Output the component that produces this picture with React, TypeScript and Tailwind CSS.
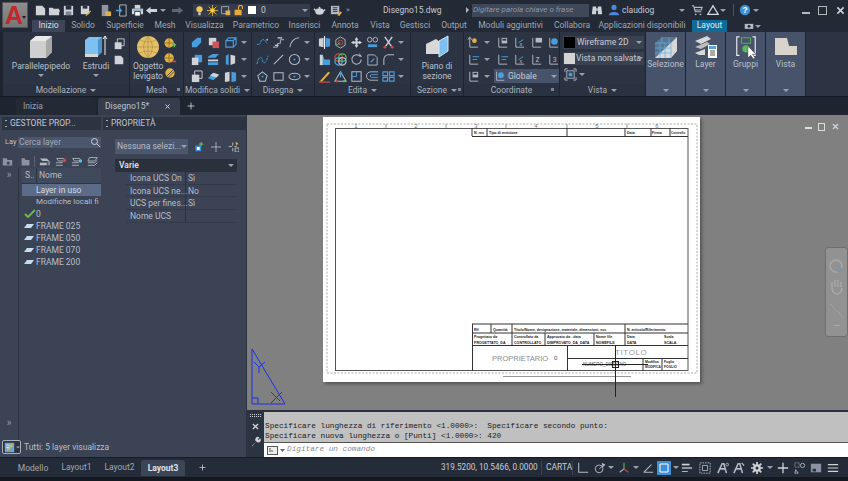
import React from "react";

const L = "#b4bac4", B = "#4a9ddd", W = "#cfd2d6", Y = "#e0b248", R = "#d0483e", G = "#5cb85c";
const line = { fill: "none", stroke: L, strokeWidth: 1 } as const;

const I: Record<string, React.ReactNode> = {
  doc: <path d="M2 2h7l3 3v7H2z" fill={W} />,
  open: <path d="M1 4h4l1 1h6v7H1zM3 7h10l-2 5H1z" fill={W} />,
  save: <g><path d="M2 2h10v10H2z" fill={W} /><path d="M4 2h6v4H4z" fill="#2a3040" /><path d="M4 8h6v4H4z" fill="#7b8494" /></g>,
  saveas: <g><path d="M2 2h9v9H2z" fill={W} /><path d="M4 2h5v3H4z" fill="#2a3040" /><path d="M7 12l5-5 1 1-5 5z" fill={Y} /></g>,
  phone: <g><path d="M3 1h7v12H3z" fill="#8f959e" /><path d="M7 8h6v5H7z" fill={Y} /></g>,
  phone2: <g><path d="M5 1h7v12H5z" fill="none" stroke={L} /><path d="M1 7h6M5 5l2 2-2 2" stroke={B} fill="none" strokeWidth="1.400" /></g>,
  print: <g><path d="M1 5h12v6H1z" fill={W} /><path d="M4 1h6v4H4z" fill={W} /><path d="M4 8h6v5H4z" fill="#fff" stroke="#2a3040" /><path d="M2 6h10v1H2z" fill={B} /></g>,
  undo: <path d="M1 7l5-4v2.500h7v3H6V11z" fill={W} />,
  redo: <path d="M13 7L8 3v2.500H1v3h7V11z" fill="#5f6674" />,
  bulb: <g><circle cx="7" cy="5.500" r="4" fill="#f4c84a" /><path d="M5.500 9.500h3V13h-3z" fill="#c9cdd3" /></g>,
  sun: <g><circle cx="7" cy="7" r="3" fill="#f4c84a" /><path d="M7 0v14M0 7h14M2 2l10 10M12 2L2 12" stroke="#f4c84a" /></g>,
  freeze: <g><path d="M2 2h9v9H2z" {...line} /><path d="M7 7h6v6H7z" fill={Y} /></g>,
  lock: <g><path d="M2 6h9v7H2z" fill="#e8a93c" /><path d="M7 6V3a2.500 2.500 0 0 1 5 0v2" fill="none" stroke="#e8a93c" strokeWidth="1.500" /></g>,
  teapot: <g><ellipse cx="7" cy="8" rx="4.500" ry="3.500" fill={W} /><path d="M1 5l3 3M13 6l-3 3" stroke={W} strokeWidth="1.500" /><circle cx="7" cy="4" r="1" fill={W} /></g>,
  qlist: <g><path d="M1 2h9v9H1z" fill={L} /><path d="M3 4h5M3 6h5M3 8h5" stroke="#2a3040" /><path d="M8 12l3-4 2 1-3 4z" fill={Y} /></g>,
  binoc: <g><path d="M2 3h4v9H1zM8 3h4l1 9H8z" fill={W} /><path d="M6 5h2v3H6z" fill={W} /></g>,
  user: <g><circle cx="7" cy="4" r="3" fill="#4b86dc" /><path d="M1 13c0-5 12-5 12 0z" fill="#4b86dc" /></g>,
  cart: <g><path d="M1 2h2l2 7h7M4 4h9l-1 3H5" {...line} strokeWidth="1.300" /><circle cx="5.500" cy="12" r="1" fill={L} /><circle cx="11" cy="12" r="1" fill={L} /></g>,
  tri: <g><path d="M7 2l6 10H1z" fill="none" stroke="#d9dfe8" strokeWidth="1.500" /></g>,
  help: <g><circle cx="7" cy="7" r="6" fill="#3f8fd6" /><text x="7" y="10.500" textAnchor="middle" fontSize="10" fontWeight="700" fill="#fff" fontFamily="Liberation Sans">?</text></g>,
  unite: <g><path d="M3 6l5-4h4v5l-5 5H2V7z" fill={B} /></g>,
  subtract: <g><path d="M2 2h8v8H2z" fill={W} /><path d="M6 6h7v7H6z" fill="#d0545a" /></g>,
  wire: <g><path d="M2 5l3-3h8v7l-3 3H2zM2 5h8v7M10 5l3-3" fill="none" stroke={B} strokeWidth="1.200" /></g>,
  overlap: <g><path d="M5 2h8v8H5z" fill={B} /><path d="M2 5h7v8H2z" fill={W} /></g>,
  layers: <g><path d="M1 4l5-3h7l-4 4H1z" fill={B} /><path d="M1 7h11v2H1z" fill={W} /><path d="M1 10h11v3H1z" fill={B} /></g>,
  split: <g><path d="M2 3l3-2v12l-3-1z" fill={B} /><path d="M7 2l5 1v8l-5 2z" fill={W} /></g>,
  stack: <g><path d="M5 1h8v8H5z" fill="none" stroke={W} /><path d="M2 5h8v8H2z" fill={W} /></g>,
  eraser: <g><path d="M1 9l6-6 6 2-6 6z" fill={B} /><path d="M3 6l4-3 6 2-3 3z" fill={W} /></g>,
  slab: <g><path d="M1 3l5-1v10l-5 1z" fill={W} /><path d="M8 2l5 1v9l-5 1z" fill={B} /></g>,
  poly: <g><path d="M1 9h3l2-5h3l3 4" fill="none" stroke={B} strokeDasharray="2 1" /><circle cx="12" cy="4" r="1" fill={L} /></g>,
  stair: <g><path d="M1 12h5V8h3V4h4" {...line} /><path d="M6 2h5M3 10h4" stroke={W} strokeWidth="1.400" /></g>,
  arc: <path d="M2 12C3 6 7 2 12 2" {...line} strokeWidth="1.100" />,
  spline: <path d="M1 12C3 3 6 3 7 8s4 3 6-5" fill="none" stroke={B} strokeDasharray="3 1" />,
  lineI: <path d="M2 12L12 2" {...line} strokeWidth="1.100" />,
  circle: <g><circle cx="7" cy="7" r="5.500" {...line} strokeWidth="1.100" /><circle cx="7" cy="7" r="1" fill={B} /></g>,
  polygon: <g><path d="M7 2l5 4-2 6H4L2 6z" {...line} strokeWidth="1.100" /><circle cx="7" cy="7" r="1" fill={B} /></g>,
  rect: <path d="M2 3h10v8H2z" {...line} strokeWidth="1.100" />,
  ell: <g><ellipse cx="7" cy="7" rx="6" ry="3.500" {...line} strokeWidth="1.100" /><circle cx="7" cy="7" r="1" fill={B} /></g>,
  mirror: <g><path d="M1 3l5-1v10l-5-1z" fill={W} /><path d="M8 2l5 1v8l-5 1z" fill={B} /><path d="M7 0v14" stroke="#fff" /></g>,
  rot3d: <g><path d="M7 1l5 3v6l-5 3-5-3V4z" {...line} /><circle cx="7" cy="7" r="2.500" fill="none" stroke={R} /><path d="M2 10l5-3" stroke={G} /></g>,
  move: <path d="M7 1l2 3H8v2h2V5l3 2-3 2V8H8v2h1l-2 3-2-3h1V8H4v1L1 7l3-2v1h2V4H5z" fill={W} />,
  link: <g><circle cx="4" cy="4" r="2.500" {...line} /><circle cx="10" cy="4" r="2.500" {...line} /><path d="M2 9h10v3H2z" fill={B} /></g>,
  scissor: <g><path d="M3 1l7 10M11 1L4 11" stroke={W} strokeWidth="1.500" /><circle cx="3" cy="12" r="1.500" fill={R} /><circle cx="11" cy="12" r="1.500" fill={R} /></g>,
  face: <g><path d="M2 2h3l2 5h6v6H2z" fill={B} /><path d="M2 2h3v11H2z" fill={W} /></g>,
  fourc: <g><circle cx="5" cy="5" r="4" fill="none" stroke={R} strokeWidth="1.400" /><circle cx="9" cy="5" r="4" fill="none" stroke={G} strokeWidth="1.400" /><circle cx="5" cy="9" r="4" fill="none" stroke={B} strokeWidth="1.400" /><circle cx="9" cy="9" r="4" fill="none" stroke={L} strokeWidth="1.400" /></g>,
  rotate: <g><path d="M12 7a5 5 0 1 1-2-4" {...line} strokeWidth="1.100" /><path d="M10 0v4h3z" fill={L} /></g>,
  scale: <g><path d="M2 2h7l3 3v8H2z" {...line} /><path d="M5 10l4-4" stroke={B} strokeWidth="1.300" /></g>,
  fillet: <path d="M2 13V7a5 5 0 0 1 5-5h6" {...line} strokeWidth="1.100" />,
  pen: <g><path d="M2 12L11 2l2 1-9 10z" fill={Y} /><path d="M1 13h12" stroke={R} strokeWidth="1.400" /></g>,
  triangle3: <g><path d="M7 2L1 12h12z" {...line} strokeWidth="1.100" /><path d="M7 2v6" stroke={B} strokeWidth="1.400" /><circle cx="3" cy="12" r="1.300" fill={R} /><circle cx="11" cy="12" r="1.300" fill={G} /></g>,
  rect2: <g><path d="M2 2h10v10H2z" {...line} strokeWidth="1.100" /><path d="M2 7h5V2" stroke={B} fill="none" /></g>,
  offset: <g><path d="M13 2H5a3 3 0 0 0 0 9h8" fill="none" stroke={L} /><path d="M13 5H6a1 1 0 0 0 0 3h7" fill="none" stroke={B} /></g>,
  grid4: <g><path d="M1 2h5v4H1zM8 2h5v4H8zM1 8h5v4H1zM8 8h5v4H8z" fill="none" stroke={B} strokeWidth="1.200" /></g>,
  meshA: <g><circle cx="6" cy="7" r="5.500" fill={Y} /><path d="M1 7h10M6 1v11" stroke="#8c6d20" /><path d="M10 9h4M12 7v5" stroke={G} strokeWidth="1.800" /></g>,
  meshB: <g><circle cx="6" cy="7" r="5.500" fill={Y} /><path d="M1 7h10M6 1v11" stroke="#8c6d20" /><path d="M9 11h5" stroke={R} strokeWidth="2" /></g>,
  meshC: <g><circle cx="7" cy="7" r="5.500" fill={Y} /><path d="M3 11l8-8M5 12l7-7" stroke="#444" /></g>,
  ucs1: <g><path d="M3 2v10h9" {...line} /><path d="M1 4l2-3 2 3" {...line} /><circle cx="8" cy="5" r="2.500" fill={Y} /></g>,
  ucs2: <g><path d="M3 2v10h9" {...line} /><path d="M6 2h6v6H6z" fill={L} /><path d="M7 3h4v2H7z" fill="#2c3444" /></g>,
  ucs3: <g><path d="M3 2v10h9" {...line} /><path d="M6 7l5-3" stroke={B} /><text x="7" y="11" fontSize="6" fill={L} fontFamily="Liberation Sans">x</text></g>,
  ucs4: <g><path d="M3 2v10h9" {...line} /><path d="M6 2h7v5H6z" fill={L} /></g>,
  ucs5: <g><path d="M3 2v10h9" {...line} /><circle cx="8" cy="6" r="3.500" fill={B} /></g>,
  ucs6: <g><path d="M3 2v10h9" {...line} /><path d="M6 4h7M6 7h5" stroke={B} /></g>,
  ucs7: <g><path d="M3 2v10h9" {...line} /><text x="6" y="10" fontSize="9" fill={L} fontFamily="Liberation Sans">z</text></g>,
  ucs8: <g><path d="M3 2v10h9" {...line} /><text x="6" y="10" fontSize="8" fill={L} fontFamily="Liberation Sans">3</text></g>,
  vp: <g><path d="M3 3h8v8H3z" {...line} /><path d="M5 5h4v4H5z" fill={B} /><path d="M1 1h3M1 1v3M13 13h-3M13 13v-3M13 1h-3M13 1v3M1 13h3M1 13v-3" stroke={L} /></g>,
  folderN: <g><path d="M1 3h5l1 2h6v7H1z" fill="#8b93a2" /><circle cx="8" cy="9" r="2" fill="#3c4353" /></g>,
  folderO: <path d="M2 3h4l1 2h5v7H2z" fill="#8b93a2" />,
  lay1: <g><path d="M1 4h8l3 3H4z" fill={L} /><path d="M1 9h8v3H1z" fill={L} /><path d="M10 7h3v5h-3z" fill="#7b8494" /></g>,
  lay2: <g><path d="M2 4h8l2 3H4z" {...line} /><path d="M1 9h8M1 12h8" stroke={L} /><circle cx="11" cy="6" r="2" fill={R} /></g>,
  lay3: <g><path d="M2 4h8l2 3H4z" {...line} /><path d="M1 9h8M1 12h8" stroke={L} /><circle cx="11" cy="7" r="2" fill="#60c0e0" /></g>,
  lay4: <g><path d="M3 3h9L9 7H1zM1 9h8l3-3M1 12h8l3-3" {...line} /></g>,
  newP: <g><path d="M2 5h8v8H2z" fill="#3f8fd6" /><path d="M4 7h4v4H4z" fill="#fff" /><path d="M10 0v6M7 3h6" stroke={G} strokeWidth="1.800" /></g>,
  pick: <path d="M7 0v5M7 9v5M0 7h5M9 7h5M6 6h2v2H6z" stroke={W} fill="none" />,
  pickA: <g><path d="M6 2v4M6 9v4M1 7h4M8 7h3" stroke={W} /><path d="M9 1l4 2-2 3z" fill={Y} /><path d="M9 9h5v5H9z" fill="none" stroke={W} /></g>,
  cam: <g><path d="M1 4h12v7H1z" fill={L} /><circle cx="7" cy="7.500" r="2" fill="#222" /></g>,
  floatl: <g><path d="M1 1h12v12H1z" fill="#6ea4d8" /><path d="M3 9l7-7 2 2-7 7z" fill={Y} /><path d="M3 4h4M3 7h3" stroke="#fff" /></g>,
  ortho: <path d="M2 1v11h11" {...line} strokeWidth="1.200" />,
  polar: <g><circle cx="6" cy="8" r="4.500" {...line} strokeWidth="1.100" /><path d="M6 8l7-5" stroke={L} /><path d="M9 1l4 2-3 3" fill={L} /></g>,
  iso: <g><path d="M7 1v7" stroke={G} strokeWidth="1.300" /><path d="M7 8l5 4" stroke={R} strokeWidth="1.300" /><path d="M7 8l-5 4" stroke={L} strokeWidth="1.300" /></g>,
  angle: <path d="M2 12h11M2 12L11 3" {...line} strokeWidth="1.200" />,
  lwt: <g><path d="M1 3h9" stroke={W} strokeWidth="2" /><path d="M1 7h12" stroke={W} strokeWidth="1.500" /><path d="M1 11h7" stroke={W} /></g>,
  sel: <g><path d="M1 1h12v12H1z" fill="none" stroke={L} strokeDasharray="2 1" /><path d="M4 4h6v6H4z" fill="none" stroke={L} /></g>,
  ann1: <g><path d="M1 13L6 2l2 0 3 11M3 8h7" {...line} strokeWidth="1.800" /><circle cx="12" cy="3" r="1.500" {...line} /></g>,
  ann2: <g><path d="M1 13L6 2l2 0 3 11M3 8h7" {...line} strokeWidth="1.800" /><path d="M10 1l3 3" stroke={L} strokeWidth="1.500" /></g>,
  gear: <g><circle cx="7" cy="7" r="4.500" fill={W} /><path d="M7 0v14M0 7h14M2 2l10 10M12 2L2 12" stroke={W} strokeWidth="2" /><circle cx="7" cy="7" r="1.800" fill="#2a3140" /></g>,
  plus: <path d="M7 1v12M1 7h12" stroke={W} strokeWidth="1.500" />,
  mon: <g><path d="M1 1h5v5H1z" {...line} strokeDasharray="1 1" /><circle cx="10" cy="4" r="2.500" {...line} /><path d="M2 9l3 4H1z" {...line} /></g>,
  full: <g><path d="M1 2h12v10H1z" fill="#8b93a2" /><path d="M3 8h4v3H3z" fill="#2a3140" /></g>,
  menu: <path d="M1 3h12M1 7h12M1 11h12" stroke={W} strokeWidth="1.400" />,
  wrench: <path d="M2 13l6-6a3 3 0 0 1 4-5l-2 2 1 1 2-2a3 3 0 0 1-5 4l-5 6z" fill={W} />,
  x: <path d="M3 3l8 8M11 3l-8 8" stroke={W} strokeWidth="2" />,
};

const Ic = ({ n, s = 14, c = "" }: { n: string; s?: number; c?: string }) => (
  <svg width={s} height={s} viewBox="0 0 14 14" className={`shrink-0 ${c}`}>{I[n]}</svg>
);
const Arr = ({ c = "" }: { c?: string }) => (
  <svg width="6" height="3" viewBox="0 0 6 3" className={`shrink-0 ${c}`}><path d="M0 0h6L3 3z" fill="#9aa1ad" /></svg>
);

function Cube() {
  return <svg width="24" height="24" viewBox="0 0 24 24" className="shrink-0"><path d="M1 6l6-5h16v16l-6 6H1z" fill="#cfcfcf" /><path d="M1 6l6-5h16l-6 5z" fill="#e9e9e9" /><path d="M17 6l6-5v16l-6 6z" fill="#a8a8a8" /></svg>;
}
function Extrude() {
  return <svg width="24" height="24" viewBox="0 0 24 24" className="shrink-0"><path d="M1 5l4-3h13v15l-5 4H1z" fill="#7ec0ef" /><path d="M14 5l4-3v15l-4 4z" fill="#4e94cc" /><path d="M1 19h13v3H1z" fill="#d8d8d8" /><path d="M21 20V1M19 4l2-3 2 3" stroke="#eee" fill="none" /></svg>;
}
function Sphere() {
  return <svg width="24" height="24" viewBox="0 0 24 24" className="shrink-0"><circle cx="12" cy="12" r="11" fill="#e3bf68" /><path d="M1 12h22M12 1v22M4 5q8 4 16 0M3 18q9-4 18 0M12 1q-9 11 0 22M12 1q9 11 0 22" stroke="#aa8a3a" fill="none" strokeWidth=".6" /></svg>;
}
function Section() {
  return <svg width="24" height="24" viewBox="0 0 24 24" className="shrink-0"><path d="M1 9l10-5 4 3v12H1z" fill="#d8d8d8" /><path d="M14 6l9-5v15l-9 6z" fill="#7ec0ef" stroke="#cfe8fa" /></svg>;
}
function SelWire() {
  return <svg width="24" height="24" viewBox="0 0 24 24" className="shrink-0"><path d="M1 8l7-6h15v14l-6 7H1z" fill="#5a7590" /><path d="M1 23L23 2v14l-6 7z" fill="#d8d8d8" /><path d="M1 8h16v15M17 8l6-6M6 8v15M11 8v15M1 13h16M1 18h16M8 2v6M15 2v6" stroke="#5fb3e6" fill="none" strokeWidth=".7" /></svg>;
}
function LayerBig() {
  return <svg width="24" height="24" viewBox="0 0 24 24" className="shrink-0"><path d="M1 6l12-5 4 3-10 5z" fill="#d8d8d8" /><path d="M1 12l12-5 3 2-9 5z" fill="#bdbdbd" /><path d="M1 18l10-4v6H5z" fill="#d8d8d8" /><path d="M14 10h9v13h-9z" fill="#fff" /><path d="M15 11h7v3h-7z" fill="#4ea4e6" /><path d="M16 16h5M16 18h5M16 20h5" stroke="#555" /></svg>;
}
function Group() {
  return <svg width="24" height="24" viewBox="0 0 24 26" className="shrink-0"><path d="M5 2H2v20h3M19 2h3v20h-3" stroke="#e6e6e6" fill="none" strokeWidth="1.300" /><path d="M7 3h10v6H7z" fill="none" stroke="#5cb85c" /><circle cx="12" cy="15" r="4" fill="#5cb85c" /><path d="M14 12v13l3-3 3 4 2-1-3-4h4z" fill="#fff" stroke="#222" strokeWidth=".5" /></svg>;
}
function ViewBig() {
  return <svg width="24" height="24" viewBox="0 0 24 24" className="shrink-0"><path d="M1 3h12l2 8h8v9H1z" fill="#d8d4cc" /></svg>;
}

const Foot = ({ t, more, c = "" }: { t: string; more?: boolean; c?: string }) => (
  <div className={`h-[12px] shrink-0 bg-[#2a3140] flex items-center justify-center gap-1 text-[8.500px] text-[#aab1bd] relative ${c}`}>
    <span>{t}</span><Arr />{more && <span className="absolute right-[2px] top-[4px] w-[3px] h-[3px] bg-[#7c8594]" />}
  </div>
);

const Big = ({ icon, label, arrow }: { icon: React.ReactNode; label: string; arrow?: boolean }) => (
  <div className="flex flex-col items-center text-[8.500px] leading-[10px] text-[#b9c0cb] text-center">
    {icon}
    <span className="mt-[2px] whitespace-pre-line">{label}</span>
    {arrow && <Arr c="mt-[3px]" />}
  </div>
);

const Tool = ({ rows, w, a = true }: { rows: string[][]; w: string; a?: boolean }) => (
  <div className="flex flex-col gap-[3px] items-center pt-[3px]">
    {rows.map((r, i) => (
      <div key={i} className={`flex items-center h-[14px] ${w}`}>
        {r.map((n) => <Ic key={n} n={n} s={13} />)}
        {a && <Arr />}
      </div>
    ))}
  </div>
);

const Collapsed = ({ icon, t, w }: { icon: React.ReactNode; t: string; w: string }) => (
  <div className={`${w} bg-[#47536a] flex flex-col items-center pt-[3px] text-[8.500px] leading-[10px] text-[#b9c0cb] h-[64px] shrink-0 relative`}>
    {icon}
    <span>{t}</span>
    <Arr c="absolute bottom-[4px]" />
  </div>
);

const tabs = [
  ["Solido", "w-[36px]"], ["Superficie", "w-[48px]"], ["Mesh", "w-[32px]"], ["Visualizza", "w-[47px]"],
  ["Parametrico", "w-[56px]"], ["Inserisci", "w-[41px]"], ["Annota", "w-[40px]"], ["Vista", "w-[30px]"],
  ["Gestisci", "w-[40px]"], ["Output", "w-[38px]"], ["Moduli aggiuntivi", "w-[75px]"], ["Collabora", "w-[48px]"],
  ["Applicazioni disponibili", "w-[92px]"],
];

function TitleBar() {
  return (
    <div className="h-[20px] shrink-0 flex items-center relative text-[#c4c9d1]">
      <div className="w-[34px] shrink-0" />
      <div className="flex items-center w-[159px] shrink-0">
        <Ic n="doc" s={13} /><Ic n="open" s={13} c="ml-[1px]" /><Ic n="save" s={13} c="ml-[1px]" /><Ic n="saveas" s={13} c="ml-[4px]" />
        <Ic n="phone" s={13} c="ml-[7px]" /><Ic n="phone2" s={13} c="ml-[3px]" /><Ic n="print" s={13} c="ml-[3px]" />
        <Ic n="undo" s={13} c="ml-[1px]" /><Arr c="ml-[2px]" /><Ic n="redo" s={13} c="ml-[5px]" />
      </div>
      <div className="w-[117px] h-[13px] bg-[#343b4a] flex items-center shrink-0 gap-[2px] pl-[1px] relative">
        <Ic n="bulb" s={11} /><Ic n="sun" s={11} /><Ic n="freeze" s={11} /><Ic n="lock" s={11} />
        <div className="w-[8px] h-[8px] bg-white ml-[2px]" />
        <span className="ml-[3px] text-[8.500px]">0</span>
        <Arr c="absolute right-[2px] top-[5px]" />
      </div>
      <div className="flex items-center gap-[2px] ml-[2px] w-[71px] shrink-0">
        <Ic n="teapot" s={13} c="ml-[1px]" /><Ic n="qlist" s={13} c="ml-[2px]" /><span className="text-[8px] ml-[1px] text-[#99a]">»</span>
      </div>
      <span className="text-[8.500px] w-[83px] shrink-0">Disegno15.dwg</span>
      <span className="w-0 h-0 border-y-[3px] border-y-transparent border-l-[3px] border-l-[#b0b6c0] mr-[3px]" />
      <div className="w-[117px] h-[13px] bg-[#3e4859] flex items-center pl-[1px] shrink-0 text-[8px] italic text-[#8c95a4]">Digitare parola chiave o frase</div>
      <Ic n="binoc" s={12} c="ml-[2px]" />
      <Ic n="user" s={12} c="ml-[5px]" />
      <span className="ml-[2px] text-[8.500px] w-[57px]">claudiog</span>
      <Arr />
      <Ic n="cart" s={12} c="ml-[6px]" />
      <Ic n="tri" s={12} c="ml-[4px]" />
      <Arr c="ml-[1px]" />
      <div className="w-px h-[12px] bg-[#4a5264] ml-[7px]" />
      <Ic n="help" s={12} c="ml-[5px]" />
      <Arr c="ml-[2px]" />
      <div className="ml-auto flex items-center gap-[8px] pr-[2px]">
        <div className="w-[8px] h-[1.500px] bg-[#b4b9c0] mt-[6px]" />
        <div className="w-[9px] h-[9px] border border-[#b4b9c0]" />
        <Ic n="x" s={11} />
      </div>
    </div>
  );
}

function TabRow() {
  return (
    <div className="h-[12px] shrink-0 flex pl-[32px] text-[8.500px] text-[#9fa6b3] leading-[11px]">
      <div className="w-[33px] bg-[#3c4658] text-center text-[#d8dce2]">Inizio</div>
      {tabs.map(([t, w]) => <div key={t} className={`${w} text-center whitespace-nowrap`}>{t}</div>)}
      <div className="w-[35px] ml-[4px] bg-[#0f6a97] text-center text-[#e0eef6]">Layout</div>
      <Ic n="cam" s={10} c="ml-[17px] mt-[1px]" /><Arr c="mt-[5px] ml-[1px]" />
    </div>
  );
}

function Ribbon() {
  return (
    <div className="h-[64px] shrink-0 flex bg-[#1f2530] gap-px pl-[3px]">
      <div className="w-[126px] flex flex-col bg-[#2c3444]">
        <div className="flex-1 flex pt-[3px]">
          <div className="w-[76px] flex justify-center"><Big icon={<Cube />} label="Parallelepipedo" arrow /></div>
          <div className="w-[34px] flex justify-center"><Big icon={<Extrude />} label="Estrudi" arrow /></div>
          <div className="flex flex-col gap-[4px] pt-[3px]"><Ic n="stack" s={12} /><Ic n="doc" s={12} /></div>
        </div>
        <Foot t="Modellazione" />
      </div>
      <div className="w-[53px] flex flex-col bg-[#2c3444]">
        <div className="flex-1 flex pt-[3px] pl-[3px]">
          <Big icon={<Sphere />} label={"Oggetto\nlevigato"} />
          <div className="flex flex-col gap-[3px] ml-[1px] pt-[2px]"><Ic n="meshA" s={12} /><Ic n="meshB" s={12} /><Ic n="meshC" s={12} /></div>
        </div>
        <div className="h-[12px] bg-[#2a3140] text-[8.500px] text-[#aab1bd] text-center relative">Mesh<span className="absolute right-[3px] top-[4px] w-[3px] h-[3px] bg-[#7c8594]" /></div>
      </div>
      <div className="w-[67px] flex flex-col bg-[#2c3444]">
        <div className="flex-1 pl-[5px]"><Tool w="w-[60px] gap-[4px]" rows={[["unite", "subtract", "wire"], ["overlap", "layers", "split"], ["stack", "eraser", "slab"]]} /></div>
        <Foot t="Modifica solidi" />
      </div>
      <div className="w-[62px] flex flex-col bg-[#2c3444]">
        <div className="flex-1 pl-[3px]"><Tool w="w-[58px] gap-[3px]" rows={[["poly", "stair", "arc"], ["spline", "lineI", "circle"], ["polygon", "rect", "ell"]]} /></div>
        <Foot t="Disegna" />
      </div>
      <div className="w-[95px] flex flex-col bg-[#2c3444]">
        <div className="flex-1 pl-[2px]"><Tool w="w-[92px] gap-[3px]" rows={[["mirror", "rot3d", "move", "link", "scissor"], ["face", "fourc", "rotate", "scale", "fillet"], ["pen", "triangle3", "rect2", "offset", "grid4"]]} /></div>
        <Foot t="Edita" />
      </div>
      <div className="w-[52px] flex flex-col bg-[#2c3444]">
        <div className="flex-1 flex justify-center pt-[3px]"><Big icon={<Section />} label={"Piano di\nsezione"} /></div>
        <Foot t="Sezione" more />
      </div>
      <div className="w-[95px] flex flex-col bg-[#2c3444]">
        <div className="flex-1 flex flex-col gap-[3px] pt-[3px] pl-[3px]">
          <div className="flex items-center h-[14px] gap-[4px]"><Ic n="ucs1" s={13} /><Arr /><Ic n="ucs2" s={13} c="ml-[2px]" /><Ic n="ucs3" s={13} /><Ic n="ucs4" s={13} /><Ic n="ucs5" s={13} /></div>
          <div className="flex items-center h-[14px] gap-[4px]"><Ic n="ucs6" s={13} /><Arr /><Ic n="ucs6" s={13} c="ml-[2px]" /><Ic n="ucs3" s={13} /><Ic n="ucs7" s={13} /><Ic n="ucs8" s={13} /></div>
          <div className="flex items-center h-[14px] gap-[4px]">
            <Ic n="ucs2" s={13} /><Arr />
            <div className="w-[65px] h-[14px] bg-[#47536a] flex items-center gap-[2px] text-[8.500px] text-[#c8cdd5] relative"><Ic n="ucs5" s={12} />Globale<Arr c="absolute right-[2px] top-[6px]" /></div>
          </div>
        </div>
        <div className="h-[12px] bg-[#2a3140] text-[8.500px] text-[#aab1bd] text-center relative">Coordinate<span className="absolute right-[5px] top-[4px] w-[3px] h-[3px] bg-[#7c8594]" /></div>
      </div>
      <div className="w-[85px] flex flex-col bg-[#2c3444]">
        <div className="flex-1 flex flex-col gap-[3px] pt-[4px] pl-[3px] text-[8.500px] text-[#c8cdd5]">
          <div className="w-[81px] h-[13px] bg-[#3a4252] flex items-center gap-[2px] relative"><div className="w-[11px] h-[11px] bg-black ml-px" />Wireframe 2D<Arr c="absolute right-[2px] top-[5px]" /></div>
          <div className="w-[81px] h-[13px] bg-[#3a4252] flex items-center gap-[1px] whitespace-nowrap relative"><div className="w-[11px] h-[11px] bg-[#d4d4d4] ml-px" />Vista non salvata<Arr c="absolute right-[1px] top-[5px]" /></div>
          <div className="flex items-center gap-[2px] pl-[1px]"><Ic n="vp" s={13} /><Arr /></div>
        </div>
        <Foot t="Vista" />
      </div>
      <Collapsed icon={<SelWire />} t="Selezione" w="w-[39px]" />
      <Collapsed icon={<LayerBig />} t="Layer" w="w-[39px]" />
      <Collapsed icon={<Group />} t="Gruppi" w="w-[39px]" />
      <Collapsed icon={<ViewBig />} t="Vista" w="w-[39px]" />
      <div className="flex-1 bg-[#2c3444]" />
    </div>
  );
}

function DocTabs() {
  return (
    <div className="h-[19px] shrink-0 flex items-end bg-[#1f2530] text-[8.500px] text-[#99a0ad] border-t border-[#171b23]">
      <div className="ml-[16px] w-[80px] h-[17px] bg-[#232a36] rounded-t-[3px] flex items-center pl-[7px]">Inizia</div>
      <div className="ml-[2px] w-[82px] h-[17px] bg-[#353d4d] rounded-t-[3px] flex items-center pl-[7px] text-[#bcc2cc] relative">Disegno15*<Ic n="x" s={7} c="absolute right-[9px] top-[5px]" /></div>
      <Ic n="plus" s={8} c="ml-[7px] mb-[5px]" />
    </div>
  );
}

const Grip = () => <span className="w-[2px] h-[7px] border-y border-[#aab] mr-[3px]" />;

function LayerPanel() {
  const rows = ["FRAME 025", "FRAME 050", "FRAME 070", "FRAME 200"];
  return (
    <div className="w-[101px] shrink-0 flex flex-col pt-[2px] text-[8.500px] text-[#b8bec9] relative">
      <div className="ml-[2px] h-[13px] bg-[#2c3341] flex items-center pl-[3px] text-[#c2c7d0] whitespace-nowrap shrink-0"><Grip />GESTORE PROP...</div>
      <div className="flex items-center h-[14px] mt-[5px] shrink-0">
        <div className="w-[18px] pl-[5px] shrink-0 whitespace-nowrap text-[7.500px]">Lay</div>
        <div className="flex-1 h-[11px] bg-[#4a566c] flex items-center pl-px text-[#9fa8b6] relative">Cerca layer<svg width="11" height="11" viewBox="0 0 11 11" className="absolute right-0 top-0"><circle cx="4.500" cy="4.500" r="3" fill="none" stroke="#cdd2da" /><path d="M7 7l3 3" stroke="#cdd2da" /></svg></div>
      </div>
      <div className="flex items-center h-[14px] mt-[5px] pl-[2px] gap-[2px] shrink-0">
        <Ic n="folderN" s={11} /><Ic n="folderO" s={11} c="ml-[5px]" /><div className="w-px h-[11px] bg-[#5a6374] ml-[1px]" />
        <Ic n="lay1" s={12} c="ml-[2px]" /><Ic n="lay2" s={12} c="ml-[2px]" /><Ic n="lay3" s={12} c="ml-[2px]" /><Ic n="lay4" s={12} c="ml-[2px]" />
      </div>
      <div className="flex-1 flex min-h-0">
        <div className="w-[19px] border-r border-[#2c3341] shrink-0 flex flex-col items-center pt-[1px] text-[#8f97a5] text-[10px] leading-[12px]">
          <span>»</span>
          <span className="mt-auto mb-[28px]">»</span>
        </div>
        <div className="flex-1 min-w-0 pl-[3px] relative">
          <div className="h-[16px] bg-[#3f4a5d] flex items-center border-b border-[#2f3644]"><span className="w-[12px] pl-[3px]">S..</span><span className="pl-[2px] border-l border-[#2c3341] ml-[2px] h-full flex items-center">Nome</span></div>
          <div className="h-[12px] bg-[#5c6b87] pl-[14px] leading-[12px] text-[#d8dce3]">Layer in uso</div>
          <div className="h-[12px] pl-[14px] leading-[12px] whitespace-nowrap text-[8px]">Modifiche locali fi</div>
          <div className="h-[12px] flex items-center"><svg width="14" height="10" viewBox="0 0 14 10" className="ml-[1px]"><path d="M2 5l3 3 7-7" stroke="#6fbf3a" strokeWidth="1.800" fill="none" /></svg><span className="ml-[-1px]">0</span></div>
          {rows.map((r) => (
            <div key={r} className="h-[12px] flex items-center">
              <svg width="14" height="6" viewBox="0 0 14 6"><path d="M2 5l3-4h7L9 5z" fill="#c6dcf0" /></svg>
              <span>{r}</span>
            </div>
          ))}
        </div>
      </div>
      <div className="absolute left-[2px] bottom-[3px] flex items-center whitespace-nowrap text-[8.500px] leading-none text-[#b8bec9]">
        <div className="w-[19px] h-[14px] border border-[#aab1bd] rounded-[2px] flex items-center gap-px pl-px bg-[#2c3341]"><Ic n="floatl" s={11} /><Arr c="w-[4px]" /></div>
        <span className="ml-[3px]">Tutti: 5 layer visualizza</span>
      </div>
    </div>
  );
}

function PropPanel() {
  const rows = [["Icona UCS On", "Sì"], ["Icona UCS ne...", "No"], ["UCS per fines...", "Sì"], ["Nome UCS", ""]];
  return (
    <div className="w-[143px] ml-[2px] shrink-0 flex flex-col pt-[2px] text-[8.500px] text-[#b8bec9]">
      <div className="h-[13px] bg-[#2c3341] flex items-center pl-[3px] text-[#c2c7d0]"><Grip />PROPRIETÀ</div>
      <div className="flex items-center mt-[9px] ml-[12px] h-[15px]">
        <div className="w-[73px] h-[15px] bg-[#4a5870] flex items-center justify-between px-[2px] whitespace-nowrap">Nessuna selezi...<Arr /></div>
        <Ic n="newP" s={10} c="ml-[6px]" /><Ic n="pick" s={10} c="ml-[7px]" /><Ic n="pickA" s={11} c="ml-[7px]" />
      </div>
      <div className="mt-[5px] ml-[12px] w-[122px] h-[13px] bg-[#2a303c] flex items-center justify-between pl-[4px] pr-[3px] text-[#dcdfe5] font-semibold">Varie<Arr /></div>
      <div className="ml-[23px] w-[111px]">
        {rows.map(([a, b]) => (
          <div key={a} className="flex h-[12.700px] leading-[12px] border-b border-[#333a49] whitespace-nowrap">
            <span className="w-[60px] pl-[4px] border-r border-[#2a303c]">{a}</span><span className="pl-[2px]">{b}</span>
          </div>
        ))}
      </div>
    </div>
  );
}

function Sheet() {
  const t = (x: number, y: number, s: string, size = 3.6, extra: any = {}) => (
    <text x={x - 323} y={y - 117} fontSize={size} fontFamily="Liberation Sans" fill="#222" fontWeight="700" {...extra}>{s}</text>
  );
  const l = (a: number, b: number, c: number, d: number, col = "#333", w = 1) => (
    <line x1={a - 323} y1={b - 117} x2={c - 323} y2={d - 117} stroke={col} strokeWidth={w} />
  );
  return (
    <svg width="377" height="265" viewBox="0 0 377 265" className="absolute left-[76px] top-[2px] bg-white shadow-[2px_2px_3px_rgba(0,0,0,0.35)] overflow-visible">
      <rect x="4" y="7" width="370" height="249" fill="none" stroke="#aaa" strokeDasharray="2 1.500" />
      <rect x="12.500" y="11.500" width="352.500" height="242" fill="none" stroke="#555" />
      {[386, 446, 506, 567, 627].map((x) => <g key={x}>{l(x, 124, x, 128, "#999")}</g>)}
      {[[356, "1"], [416, "2"], [476, "3"], [536, "4"], [597, "5"], [657, "6"]].map(([x, s]) => (
        <text key={s} x={(x as number) - 323} y="10.500" fontSize="6" fontFamily="Liberation Sans" fill="#777" textAnchor="middle">{s}</text>
      ))}
      {l(472, 136.500, 688, 136.500)}
      {[472, 487, 567, 625, 651, 670].map((x) => <g key={x}>{l(x, 128, x, 136)}</g>)}
      {t(474, 134, "N. rev")}{t(489, 134, "Tipo di revisione")}{t(627, 134, "Data")}{t(652, 134, "Firma")}{t(671, 134, "Controllo", 3.2)}
      {l(472, 324, 688, 324)}{l(472, 333, 688, 333)}{l(472, 345.500, 688, 345.500)}
      {l(472.500, 324, 472.500, 371)}
      {[491, 512, 625].map((x) => <g key={x}>{l(x, 324, x, 333)}</g>)}
      {[512, 545, 594, 625].map((x) => <g key={x}>{l(x, 333, x, 345)}</g>)}
      {l(567.500, 345, 567.500, 371)}{l(567, 358.500, 688, 358.500)}
      {l(643, 358, 643, 371)}{l(662, 358, 662, 371)}
      {t(474, 331, "Rif")}{t(493, 331, "Quantità")}{t(514, 331, "Titolo/Nome, designazione, materiale, dimensioni, ecc")}{t(627, 331, "N. articolo/Riferimento")}
      {t(474, 338, "Progettato da")}{t(474, 343.500, "PROGETTATO_DA")}
      {t(514, 338, "Controllato da")}{t(514, 343.500, "CONTROLLATO_")}
      {t(547, 338, "Approvato da - data")}{t(547, 343.500, "DIMPROVATO_DA_DATA")}
      {t(596, 338, "Nome file")}{t(596, 343.500, "NOMEFILE")}
      {t(627, 338, "Data")}{t(627, 343.500, "DATA")}
      {t(664, 338, "Scala")}{t(664, 343.500, "SCALA")}
      {t(645, 362.500, "Modifica", 3.4)}{t(645, 368, "MODIFICA", 3.2)}{t(664, 362.500, "Foglio", 3.4)}{t(664, 368, "FOGLIO", 3.4)}
      <text x={492 - 323} y={361 - 117} fontSize="7.500" fontFamily="Liberation Sans" fill="#8a8a8a">PROPRIETARIO</text>
      <text x={554 - 323} y={360 - 117} fontSize="6" fontFamily="Liberation Sans" fill="#555">0</text>
      <text x={615 - 323} y={355 - 117} fontSize="8" fontFamily="Liberation Sans" letterSpacing=".6" fill="#999">TITOLO</text>
      <text x={583 - 323} y={366 - 117} fontSize="4.500" fontFamily="Liberation Sans" fill="#555">NUMERO_DISEGNO</text>
      {l(503, 376.500, 631, 376.500, "#999")}
      {l(582, 364.500, 648, 364.500, "#222")}{l(615.500, 345, 615.500, 397, "#222")}
      <rect x={612.500 - 323} y={361.500 - 117} width="6" height="6" fill="none" stroke="#222" />
    </svg>
  );
}

function Canvas() {
  return (
    <div className="flex-1 relative bg-[#808080] min-h-0 overflow-hidden">
      <Sheet />
      <svg width="36" height="58" viewBox="0 0 36 58" className="absolute left-[4px] top-[233px]">
        <path d="M1 1v55h33zM1 50h6v6M3 14l5 5 6-5M8 19v6M20 44l9 9M31 44l-11 11" fill="none" stroke="#1c30e0" />
      </svg>
      <div className="absolute left-[558px] top-[7px] flex items-center gap-[6px]">
        <div className="w-[7px] h-[2px] bg-[#ddd] mt-[3px]" />
        <div className="w-[7px] h-[8px] border border-[#ddd]" />
        <Ic n="x" s={9} />
      </div>
      <div className="absolute left-[578px] top-[132px] w-[23px] h-[90px] rounded-[3px] bg-[#929292] border border-[#6d6d6d] flex flex-col items-center gap-[5px] pt-[10px]">
        <svg width="16" height="16" viewBox="0 0 16 16"><circle cx="7" cy="8" r="6" fill="none" stroke="#a8a8a8" strokeWidth="1.500" /><path d="M8 10h7v4H8z" fill="#87939f" /></svg>
        <svg width="16" height="18" viewBox="0 0 16 18"><path d="M3 8V3M6 8V1M9 8V1M12 8V3M3 8c0 8 9 10 10 1" fill="none" stroke="#a8a8a8" strokeWidth="1.500" /></svg>
        <svg width="16" height="18" viewBox="0 0 16 18"><path d="M2 2l4 6 4 2 4 6" fill="none" stroke="#a8a8a8" strokeDasharray="2 1" /></svg>
        <div className="w-[6px] h-px bg-[#a8a8a8]" />
      </div>
    </div>
  );
}

function Command() {
  return (
    <div className="h-[47px] shrink-0 flex border-t-2 border-[#2a3040]">
      <div className="w-[17px] bg-[#2c3341] flex flex-col items-center pt-[2px] gap-[5px] shrink-0">
        <div className="w-[11px] h-[3px] border-y border-dotted border-[#cdd2da]" />
        <Ic n="x" s={9} />
        <Ic n="wrench" s={11} />
      </div>
      <div className="flex-1 flex flex-col min-w-0">
        <div className="flex-1 bg-[#c0c0c0] pt-[9px] pl-px font-['Liberation_Mono',monospace] text-[7.720px] leading-[10px] text-[#1a1a1a] whitespace-pre border-b border-[#555]">
          <div>Specificare lunghezza di riferimento &lt;1.0000&gt;:  Specificare secondo punto:</div>
          <div>Specificare nuova lunghezza o [Punti] &lt;1.0000&gt;: 420</div>
        </div>
        <div className="h-[14px] bg-white flex items-center pl-[3px] font-['Liberation_Mono',monospace] text-[7.720px] italic text-[#8a8a8a]">
          <svg width="11" height="9" viewBox="0 0 11 9"><rect x=".5" y=".5" width="10" height="8" fill="#eee" stroke="#555" /><path d="M2 3h2M2 5h4" stroke="#555" /></svg>
          <svg width="5" height="3" viewBox="0 0 5 3" className="mx-[2px]"><path d="M0 0h5L2.500 3z" fill="#666" /></svg>
          Digitare un comando
        </div>
      </div>
    </div>
  );
}

function StatusBar() {
  const S = ({ n, c = "" }: { n: string; c?: string }) => <Ic n={n} s={12} c={c} />;
  return (
    <div className="h-[20px] shrink-0 flex items-center bg-[#252c39] text-[8.500px] text-[#9fa6b3] border-t border-[#171b23] pl-[6px]">
      <div className="w-[44px] h-[14px] mr-0 text-center leading-[14px] ml-[5px]">Modello</div>
      <div className="w-[43px] text-center">Layout1</div>
      <div className="w-[43px] text-center">Layout2</div>
      <div className="w-[44px] h-[16px] bg-[#3c4556] rounded-t-[3px] leading-[16px] text-center font-bold text-[#e0e3e8]">Layout3</div>
      <Ic n="plus" s={7} c="ml-[14px]" />
      <div className="ml-[235px] h-full flex items-center text-[#c8cdd5] whitespace-nowrap">
        <span className="text-[8.200px] w-[100px]">319.5200, 10.5466, 0.0000</span>
        <div className="w-px h-[14px] bg-[#3a4252]" />
        <span className="ml-[4px] w-[26px]">CARTA</span>
        <div className="w-px h-[14px] bg-[#3a4252]" />
        <S n="ortho" c="ml-[4px]" />
        <S n="polar" c="ml-[5px]" /><Arr c="ml-[2px]" />
        <S n="iso" c="ml-[4px]" /><Arr c="ml-[3px]" />
        <S n="angle" c="ml-[3px]" />
        <div className="w-[14px] h-[14px] bg-[#3f8fd6] ml-[3px] flex items-center justify-center"><svg width="10" height="10" viewBox="0 0 10 10"><path d="M1 1h8v8H1z" fill="none" stroke="#fff" /></svg></div>
        <Arr c="ml-[2px]" />
        <S n="lwt" c="ml-[2px]" />
        <S n="sel" c="ml-[6px]" /><S n="ann1" c="ml-[6px]" /><S n="ann2" c="ml-[4px]" />
        <S n="gear" c="ml-[6px]" /><Arr c="ml-[4px]" />
        <S n="plus" c="ml-[4px]" /><S n="mon" c="ml-[5px]" /><S n="full" c="ml-[4px]" /><S n="menu" c="ml-[5px]" />
      </div>
    </div>
  );
}

export default function App() {
  return (
    <div className="w-[848px] h-[481px] overflow-hidden bg-[#232a36] flex flex-col relative font-['Roboto','Liberation_Sans',sans-serif]">
      <div className="absolute left-[2px] top-[2px] w-[26px] h-[26px] bg-gradient-to-b from-[#8d8d8d] to-[#777777] border border-[#555] flex items-center z-10 pl-[2px]">
        <span className="text-[#c4262a] font-bold text-[25px] leading-none font-['Liberation_Sans',sans-serif]">A</span>
        <svg width="4" height="3" viewBox="0 0 4 3" className="absolute right-[1px] top-[13px]"><path d="M0 0h4L2 3z" fill="#222" /></svg>
      </div>
      <TitleBar />
      <TabRow />
      <Ribbon />
      <DocTabs />
      <div className="flex-1 flex min-h-0 bg-[#3b4354]">
        <LayerPanel />
        <PropPanel />
        <div className="flex-1 flex flex-col min-w-0 border-l border-[#2c3341]">
          <Canvas />
          <Command />
        </div>
      </div>
      <StatusBar />
      <div className="h-[4px] shrink-0 bg-[#15181e]" />
    </div>
  );
}
